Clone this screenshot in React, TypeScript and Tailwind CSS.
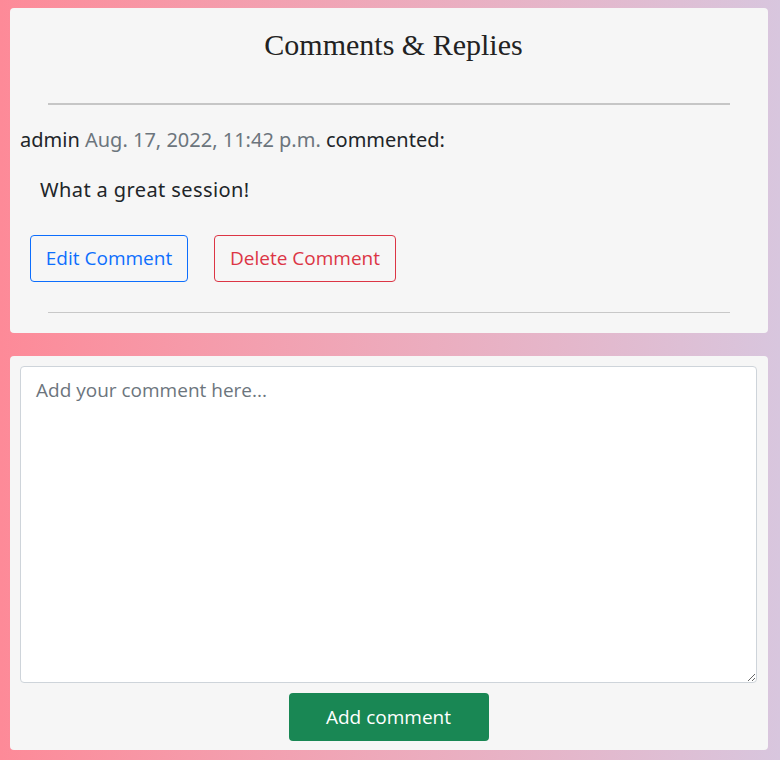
import React from "react";

export default function App() {
  return (
    <div className="w-[780px] h-[760px] overflow-hidden bg-gradient-to-r from-[#fd8a98] to-[#d8c6de] pt-[8px] px-[10px] pr-[12px]">
      <div className="bg-[#f6f6f6] rounded-[4px] h-[325px] flex flex-col">
        <h2 className="text-center text-[30px] leading-[36px] text-[#222] pt-[19px] pl-[9px] [font-family:'Liberation_Serif',serif]">
          Comments &amp; Replies
        </h2>
        <div className="mx-[38px] mt-[40px] h-[2px] bg-[#c6c6c6]" />
        <div className="[font-family:'Noto_Sans',sans-serif] text-[20px] text-[#212529] pl-[10px] mt-[21px] leading-[28px]">
          admin <span className="text-[#6c757d]">Aug. 17, 2022, 11:42 p.m.</span> commented:
        </div>
        <div className="[font-family:'Noto_Sans',sans-serif] text-[20px] tracking-[0.4px] text-[#212529] pl-[30px] mt-[22px] leading-[28px]">
          What a great session!
        </div>
        <div className="flex gap-[26px] pl-[20px] mt-[31px] [font-family:'Open_Sans',sans-serif]">
          <button className="h-[47px] w-[158px] border border-[#0d6efd] text-[#0d6efd] rounded-[4px] text-[19px]">
            Edit Comment
          </button>
          <button className="h-[47px] w-[182px] border border-[#dc3545] text-[#dc3545] rounded-[4px] text-[19px]">
            Delete Comment
          </button>
        </div>
        <div className="mx-[38px] mt-[30px] h-px bg-[#c8c8c8]" />
      </div>
      <div className="bg-[#f6f6f6] rounded-[4px] mt-[23px] h-[394px] p-[10px] pr-[11px] pb-0 flex flex-col">
        <textarea
          placeholder="Add your comment here..."
          className="w-full h-[317px] bg-white border border-[#ced4da] rounded-[4px] px-[15px] py-[9px] text-[19px] [font-family:'Open_Sans',sans-serif] text-[#212529] placeholder:text-[#6c757d] outline-none"
        />
        <div className="flex justify-center mt-[10px]">
          <button className="h-[48px] w-[200px] bg-[#198754] text-white rounded-[4px] text-[19px] [font-family:'Open_Sans',sans-serif]">
            Add comment
          </button>
        </div>
      </div>
    </div>
  );
}
